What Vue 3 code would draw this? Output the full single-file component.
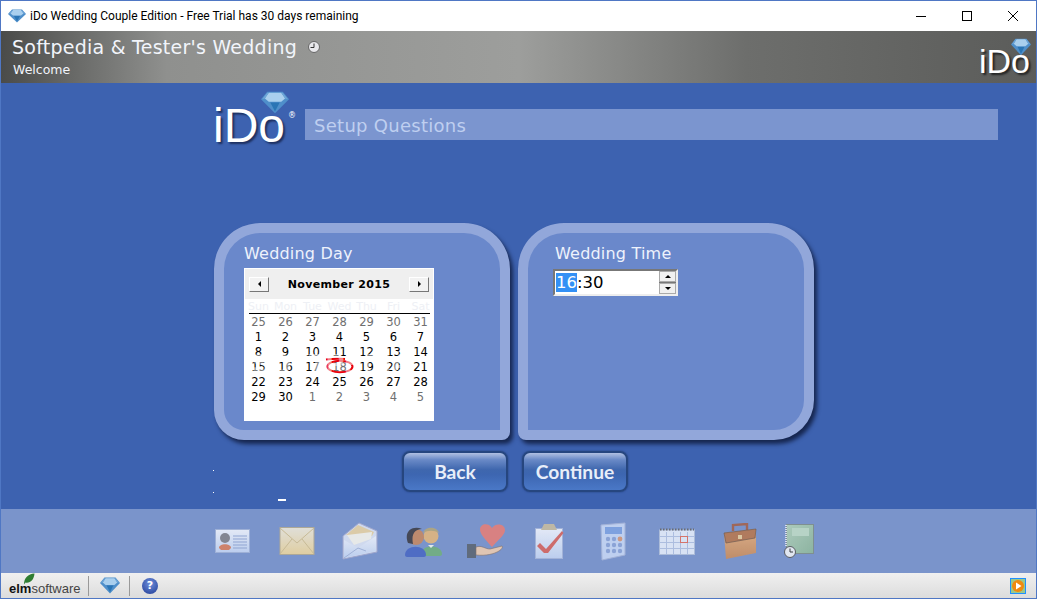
<template>
  <div class="window">
    <div class="titlebar">
      <svg class="title-gem" width="18" height="14" viewBox="0 0 18 14">
        <use href="#gem" />
      </svg>
      <span class="title-text">iDo Wedding Couple Edition - Free Trial has 30 days remaining</span>
      <div class="win-btns">
        <svg width="46" height="30" viewBox="0 0 46 30"><path d="M18 15.500h10" stroke="#000" fill="none" /></svg>
        <svg width="46" height="30" viewBox="0 0 46 30"><rect x="18.500" y="10.500" width="9" height="9" stroke="#000" fill="none" /></svg>
        <svg width="46" height="30" viewBox="0 0 46 30"><path d="M18 10l10 10M28 10l-10 10" stroke="#000" fill="none" /></svg>
      </div>
    </div>

    <header class="header">
      <div class="header-text">
        <div class="wedding-row">
          <span class="wedding-name">Softpedia &amp; Tester's Wedding</span>
          <svg class="clock" width="12" height="12" viewBox="0 0 12 12">
            <circle cx="6" cy="6" r="5.500" fill="#e8e8ec" stroke="#666" stroke-width="1" />
            <path d="M6 2.500V6.500H2.500" stroke="#333" fill="none" />
          </svg>
        </div>
        <div class="page-name">Welcome</div>
      </div>
      <div class="header-logo">
        <span>iDo</span>
        <svg class="header-gem" width="20" height="18" viewBox="0 0 18 14" preserveAspectRatio="none"><use href="#gem" /></svg>
      </div>
    </header>

    <main class="main">
      <div class="setup-row">
        <div class="big-logo">
          <span class="big-logo-text">iDo</span>
          <span class="reg">®</span>
          <svg class="big-gem" width="28" height="23" viewBox="0 0 18 14" preserveAspectRatio="none"><use href="#gem" /></svg>
        </div>
        <div class="setup-bar">Setup Questions</div>
      </div>

      <div class="panels">
        <section class="panel">
          <h2 class="panel-title">Wedding Day</h2>
          <div class="calendar">
            <div class="cal-head">
              <span class="cal-btn"><i class="tri-left"></i></span>
              <span class="cal-month">November 2015</span>
              <span class="cal-btn"><i class="tri-right"></i></span>
            </div>
            <div class="cal-dow">
              <span v-for="d in dows" :key="d">{{ d }}</span>
            </div>
            <div class="cal-rule"></div>
            <div class="cal-days">
              <span v-for="(c, i) in cells" :key="i" :class="['day', { muted: c.muted, 'is-today': c.today }]">
                {{ c.n }}
                <svg v-if="c.today" class="today" width="30" height="17" viewBox="0 0 30 17">
                  <ellipse cx="15" cy="9.500" rx="12.500" ry="5.800" fill="none" stroke="#e8000a" stroke-width="2" />
                  <path d="M1 2.500q10-1.200 19-.5" fill="none" stroke="#e8000a" stroke-width="2" />
                </svg>
              </span>
            </div>
            <span class="watermark">SOFTPEDIA</span>
          </div>
        </section>

        <section class="panel">
          <h2 class="panel-title time-title">Wedding Time</h2>
          <div class="time-box">
            <div class="time-value"><span class="sel">16</span>:30</div>
            <div class="spin">
              <span class="spin-btn"><i class="tri-up"></i></span>
              <span class="spin-btn"><i class="tri-down"></i></span>
            </div>
          </div>
        </section>
      </div>

      <div class="actions">
        <button class="action">Back</button>
        <button class="action">Continue</button>
      </div>

      <i class="speck s1"></i>
      <i class="speck s2"></i>
      <i class="speck s3"></i>
    </main>

    <nav class="dock">
      <!-- contact card -->
      <svg class="ic" width="37" height="26" viewBox="0 0 37 26">
        <defs>
          <linearGradient id="env" x1="0" y1="0" x2="0" y2="1">
            <stop offset="0" stop-color="#efeadb" />
            <stop offset="1" stop-color="#eed69c" />
          </linearGradient>
          <linearGradient id="blu" x1="0" y1="0" x2="0" y2="1">
            <stop offset="0" stop-color="#f2f5fc" />
            <stop offset="1" stop-color="#c5d6f3" />
          </linearGradient>
          <linearGradient id="grn" x1="0" y1="0" x2="1" y2="1">
            <stop offset="0" stop-color="#b4d3ba" />
            <stop offset="1" stop-color="#8fb89b" />
          </linearGradient>
          <linearGradient id="brf" x1="0" y1="0" x2="0" y2="1">
            <stop offset="0" stop-color="#e8b27e" />
            <stop offset="1" stop-color="#c98c5d" />
          </linearGradient>
        </defs>
        <rect x="1.500" y="1.500" width="34" height="23" fill="url(#blu)" stroke="#a3b4d8" />
        <circle cx="11" cy="10" r="5" fill="#85858b" />
        <path d="M5 20c0-5 12-5 12 0l-2 2H7z" fill="#d9805f" />
        <path d="M19 8h14M19 11h14M19 14h14M19 17h14M19 20h14" stroke="#93a8d4" stroke-width="1.200" />
      </svg>
      <!-- envelope -->
      <svg class="ic" width="36" height="30" viewBox="0 0 36 30">
        <rect x="1" y="1.500" width="34" height="27" fill="url(#env)" stroke="#b5ab90" />
        <path d="M1 2l17 15L35 2M1 28l12-15M35 28L23 13" fill="none" stroke="#d2c08f" />
      </svg>
      <!-- open envelope -->
      <svg class="ic" width="36" height="38" viewBox="0 0 36 38">
        <path d="M1 14L17 1l18 8v21L1 37z" fill="#dbe3f3" stroke="#a5a9cc" />
        <path d="M4 13L16 3l16 7-2 4z" fill="#e9d3a4" />
        <path d="M5 13l25-3-1 7-17 6z" fill="#f7f5ec" />
        <path d="M2 18l14 8 18-12v15L2 36z" fill="url(#blu)" />
        <path d="M2 36l14-10 8 3" fill="none" stroke="#a5b6d9" />
      </svg>
      <!-- couple -->
      <svg class="ic" width="38" height="31" viewBox="0 0 38 31">
        <circle cx="27" cy="10" r="7.500" fill="#e3b77d" />
        <path d="M19 7c2-7 14-7 16 0-5-3-11-3-16 0z" fill="#b3a77c" />
        <path d="M17 28c0-10 21-10 21 0 0 1-1 2-2 2H19c-1 0-2-1-2-2z" fill="#71b07e" />
        <path d="M24 19l3 3 3-3z" fill="#f0f4f0" />
        <circle cx="12" cy="11" r="8" fill="#c78962" />
        <path d="M4 17C-1 4 10-1 18 3c-7 0-11 5-9 15z" fill="#3e3e46" />
        <path d="M1 29c0-11 21-11 21 0 0 1-1 2-2 2H3c-1 0-2-1-2-2z" fill="#4a68c4" />
      </svg>
      <!-- heart in hand -->
      <svg class="ic" width="38" height="36" viewBox="0 0 38 36">
        <path d="M25 24C18 16 13 11 13 6.500 13 1 21-1 25 5c4-6 13-4 13 2 0 5-7 10-13 17z" fill="#e67f78" />
        <path d="M0 21h9v14H0z" fill="#5d6672" />
        <path d="M9 24c6-2 9 2 14 2l12-3c1 1 0 3-3 5-5 3-13 5-23 4z" fill="#eeccb0" stroke="#7d6b5f" stroke-width=".6" />
      </svg>
      <!-- checklist -->
      <svg class="ic" width="29" height="35" viewBox="0 0 29 35">
        <rect x=".5" y="4.500" width="27" height="30" fill="url(#blu)" stroke="#a9b8da" />
        <path d="M9 0h10l3 6H6z" fill="#c9bda0" />
        <path d="M2 22l3-3 6 6L27 7l1.500 2L13 29H9z" fill="#d9675f" />
      </svg>
      <!-- calculator -->
      <svg class="ic" width="26" height="39" viewBox="0 0 26 39">
        <path d="M1 3l24-2v32L2 38z" fill="#c8d8f5" stroke="#a9b7d9" />
        <rect x="5" y="5" width="17" height="7" fill="#7fa3e2" />
        <g fill="#8ea6d8">
          <circle cx="8" cy="17" r="2.200" /><circle cx="14" cy="17" r="2.200" />
          <circle cx="8" cy="23" r="2.200" /><circle cx="14" cy="23" r="2.200" /><circle cx="20" cy="23" r="2.200" />
          <circle cx="8" cy="29" r="2.200" /><circle cx="14" cy="29" r="2.200" /><circle cx="20" cy="29" r="2.200" />
        </g>
        <circle cx="20" cy="17" r="2.400" fill="#d89a78" />
      </svg>
      <!-- calendar -->
      <svg class="ic" width="36" height="27" viewBox="0 0 36 27">
        <rect x=".5" y="2" width="35" height="24.500" fill="#e6edfa" stroke="#b4c2dc" />
        <path d="M1 1.500h34" stroke="#666" stroke-width="2" stroke-dasharray="1.500 1.500" />
        <path d="M7.500 4v22M14.500 4v22M21.500 4v22M28.500 4v22M1 8.500h34M1 14.500h34M1 20.500h34" stroke="#b3c3e2" />
        <rect x="21.500" y="8.500" width="7" height="6" fill="none" stroke="#e2705f" />
      </svg>
      <!-- briefcase -->
      <svg class="ic" width="34" height="36" viewBox="0 0 34 36">
        <path d="M10 8V2l14-1v6" fill="none" stroke="#a5614a" stroke-width="2.400" />
        <path d="M1 10l32-4v24L3 36z" fill="url(#brf)" />
        <path d="M1 10l32-4-1 9-29 5z" fill="#b8784f" stroke="#6f5444" stroke-width=".7" />
        <rect x="15" y="12" width="4" height="4" fill="#e8cf9d" />
      </svg>
      <!-- book with clock -->
      <svg class="ic" width="31" height="34" viewBox="0 0 31 34">
        <rect x="2.500" y=".5" width="27" height="29" fill="url(#grn)" stroke="#7f8f88" />
        <rect x="8" y="4" width="17" height="8" fill="#c0dcc6" />
        <path d="M2 1v22" stroke="#e4e6f0" stroke-width="2" stroke-dasharray="1 1" />
        <circle cx="6" cy="28" r="5.500" fill="#f0f2f6" stroke="#555" />
        <path d="M6 24.500V28h3" fill="none" stroke="#333" />
      </svg>
    </nav>

    <footer class="status">
      <div class="elm">
        <svg class="leaf" width="12" height="12" viewBox="0 0 12 12"><path d="M1 11.500C1 5 5 1 11.500 .5 11 7 7 10.500 2.500 9.500z" fill="#2f7d32" /></svg>
        <span class="elm-bold">elm</span><span class="elm-soft">software</span>
      </div>
      <i class="sep"></i>
      <svg class="st-gem" width="20" height="17" viewBox="0 0 18 14" preserveAspectRatio="none"><use href="#gem" /></svg>
      <i class="sep"></i>
      <span class="help">?</span>
      <span class="play">
        <svg width="16" height="16" viewBox="0 0 16 16">
          <rect x=".5" y=".5" width="15" height="15" fill="#9cc88a" stroke="#1e90ff" />
          <circle cx="8" cy="8" r="6" fill="#f08a10" />
          <path d="M6 4.500l5.500 3.500L6 11.500z" fill="#fff" />
        </svg>
      </span>
    </footer>

    <svg class="sprites" width="0" height="0">
      <symbol id="gem" viewBox="0 0 18 14">
        <path d="M4 .5h10l4 4.500-9 8.500L0 5z" fill="#4f8fca" />
        <path d="M5 1h8l2.500 3.500L13 6.500H5L2.500 4.500z" fill="#a9cfee" />
        <path d="M5 1L2.500 4.500 .8 4.800 4 1zM13 1l2.500 3.500 1.700.3L14 1z" fill="#6fa6d8" />
        <path d="M6 7h6l-3 5.500z" fill="#2a75b5" />
      </symbol>
    </svg>
  </div>
</template>

<script setup>
const dows = ['Sun', 'Mon', 'Tue', 'Wed', 'Thu', 'Fri', 'Sat']

// oct 25..31, nov 1..30, dec 1..5
const cells = []
for (let n = 25; n <= 31; n++) cells.push({ n, muted: true })
for (let n = 1; n <= 30; n++) cells.push({ n, today: n === 18 })
for (let n = 1; n <= 5; n++) cells.push({ n, muted: true })
</script>

<style>
html, body {
  margin: 0;
  overflow: hidden;
}
</style>

<style scoped>
.window {
  position: relative;
  width: 1037px;
  height: 599px;
  box-sizing: border-box;
  border: 1px solid #4f77c4;
  display: flex;
  flex-direction: column;
  overflow: hidden;
  background: #3d62b0;
  font-family: "DejaVu Sans", Verdana, sans-serif;
}

.sprites {
  position: absolute;
}

.titlebar {
  height: 30px;
  flex: none;
  background: #fff;
  display: flex;
  align-items: center;
  padding-left: 7px;
}

.title-gem {
  margin-right: 4px;
  margin-top: -1px;
}

.title-text {
  font-family: Roboto, "Noto Sans", sans-serif;
  font-size: 12px;
  color: #000;
  margin-top: -1px;
}

.win-btns {
  margin-left: auto;
  display: flex;
}

.win-btns svg {
  display: block;
}

.header {
  height: 52px;
  flex: none;
  display: flex;
  justify-content: space-between;
  background: linear-gradient(90deg, #4a4b49 0%, #8f908e 16%, #9d9e9c 50%, #6d6e6c 72%, #5b5c5a 100%);
}

.header-text {
  padding: 3px 0 0 11px;
  color: #f2f5fb;
}

.wedding-row {
  display: flex;
  align-items: center;
  height: 26px;
}

.wedding-name {
  font-size: 19px;
  letter-spacing: 0.25px;
}

.clock {
  margin-left: 11px;
}

.page-name {
  font-size: 12.500px;
  margin-top: 2px;
  padding-left: 1px;
}

.header-logo {
  position: relative;
  width: 58px;
  height: 52px;
  color: #fff;
  font-family: "Liberation Sans", Arial, sans-serif;
  font-size: 34px;
  line-height: 52px;
  text-shadow: 2px 2px 2px #222;
  text-align: right;
  padding-right: 6px;
  box-sizing: border-box;
}

.header-logo span {
  display: block;
  margin-top: 4px;
}

.header-gem {
  position: absolute;
  right: 5px;
  top: 7px;
}

.main {
  position: relative;
  flex: 1;
  min-height: 0;
  display: flex;
  flex-direction: column;
  align-items: center;
}

.setup-row {
  width: 785px;
  height: 140px;
  display: flex;
  align-items: flex-start;
  align-self: flex-start;
  margin-left: 212px;
}

.big-logo {
  position: relative;
  width: 92px;
  height: 70px;
  flex: none;
}

.big-logo-text {
  position: absolute;
  left: 0;
  top: 13px;
  font-family: "Liberation Sans", Arial, sans-serif;
  font-size: 48px;
  line-height: 60px;
  color: #fff;
  text-shadow: 2px 2px 2px #1d2f5f;
}

.big-gem {
  position: absolute;
  left: 48px;
  top: 8px;
}

.reg {
  position: absolute;
  left: 75px;
  top: 28px;
  font-size: 8px;
  color: #fff;
}

.setup-bar {
  flex: 1;
  height: 31px;
  margin-top: 26px;
  padding-left: 9px;
  background: #7b95cf;
  color: #bfcff0;
  font-size: 18px;
  line-height: 34px;
  letter-spacing: 0.28px;
  box-sizing: border-box;
}

.panels {
  display: flex;
  gap: 8px;
  align-self: flex-start;
  margin-left: 213px;
}

.panel {
  width: 296px;
  height: 217px;
  box-sizing: border-box;
  border: 10px solid #92a7da;
  border-radius: 46px 46px 8px 30px;
  background: #6a88cb;
  box-shadow: 3px 4px 4px #16264f;
  padding: 11px 20px 0;
}

.panel:last-child {
  border-bottom-left-radius: 8px;
  border-bottom-right-radius: 40px;
}

.panel-title {
  margin: 0;
  font-size: 16px;
  font-weight: 400;
  color: #eef2fc;
  line-height: 20px;
  letter-spacing: 0.2px;
}

.calendar {
  position: relative;
  width: 190px;
  height: 153px;
  margin-top: 4px;
  background: #fff;
  font-size: 11.500px;
  color: #000;
  display: flex;
  flex-direction: column;
  overflow: hidden;
}

.cal-head {
  height: 30px;
  margin: 1px 1px 0;
  background: #efefef;
  display: flex;
  align-items: center;
  justify-content: space-between;
  padding: 0 4px;
  flex: none;
}

.cal-btn {
  width: 18px;
  height: 13px;
  background: #f2f2f2;
  border: 1px solid;
  border-color: #fff #777 #777 #fff;
  display: flex;
  align-items: center;
  justify-content: center;
}

.cal-month {
  font-weight: 700;
  font-size: 11px;
  letter-spacing: 0.35px;
}

.tri-left,
.tri-right,
.tri-up,
.tri-down {
  display: block;
  width: 0;
  height: 0;
  border: 3px solid transparent;
}

.tri-left {
  border-right-color: #000;
  border-left-width: 0;
}

.tri-right {
  border-left-color: #000;
  border-right-width: 0;
}

.tri-up {
  border-bottom-color: #000;
  border-top-width: 0;
}

.tri-down {
  border-top-color: #000;
  border-bottom-width: 0;
}

.cal-dow {
  display: grid;
  grid-template-columns: repeat(7, 27px);
  margin-left: 1px;
  height: 14px;
  line-height: 15px;
  font-size: 11px;
  text-align: center;
  color: #eef0f5;
  flex: none;
}

.cal-rule {
  height: 1px;
  margin: 0 4px 0 5px;
  background: #000;
  flex: none;
}

.cal-days {
  display: grid;
  grid-template-columns: repeat(7, 27px);
  grid-auto-rows: 15px;
  margin: 1px 0 0 1px;
  text-align: center;
  line-height: 15px;
}

.day {
  position: relative;
}

.muted,
.is-today {
  color: #6f6f6f;
}

.today {
  position: absolute;
  left: -1px;
  top: -3px;
}

/* faint site watermark that lies over the day grid */
.watermark {
  position: absolute;
  left: 7px;
  top: 82px;
  font-family: "Liberation Sans", Arial, sans-serif;
  font-size: 28px;
  font-weight: 700;
  line-height: 28px;
  color: rgba(255, 255, 255, 0.5);
  white-space: nowrap;
}

.time-title {
  margin-left: 7px;
}

.time-box {
  width: 125px;
  height: 27px;
  box-sizing: border-box;
  margin: 5px 0 0 5px;
  border: 2px solid;
  border-color: #777 #eee #eee #777;
  background: #fff;
  display: flex;
  align-items: center;
  justify-content: space-between;
}

.time-value {
  font-size: 16.500px;
  padding-left: 1px;
  color: #000;
}

.sel {
  background: #3390f5;
  color: #fff;
}

.spin {
  width: 17px;
  display: flex;
  flex-direction: column;
  gap: 1px;
  background: #777;
}

.spin-btn {
  background: #f0f0f0;
  border: 1px solid #aaa;
  display: flex;
  align-items: center;
  justify-content: center;
  height: 9px;
}

.actions {
  display: flex;
  gap: 14px;
  margin-top: 11px;
  align-self: flex-start;
  margin-left: 401px;
}

.action {
  width: 106px;
  height: 41px;
  border: 2px solid #26467f;
  border-radius: 8px;
  background: linear-gradient(#b0c0e2 0%, #6a8ac7 18%, #3f67ae 45%, #3d66b1 58%, #4a78c7 100%);
  color: #e8eef9;
  font-family: "Lato", "Noto Sans", sans-serif;
  font-size: 19.200px;
  font-weight: 700;
  padding: 0;
  box-shadow: 0 0 2px #203d78;
}

.speck {
  position: absolute;
  background: #fff;
}

.s1 { left: 212px; top: 387px; width: 1px; height: 1px; }
.s2 { left: 212px; top: 409px; width: 1px; height: 1px; }
.s3 { left: 277px; top: 416px; width: 8px; height: 2px; }

.dock {
  height: 64px;
  flex: none;
  box-sizing: border-box;
  padding-left: 213px;
  background: #7a94cb;
  display: grid;
  grid-template-columns: 65px 63px 62px 63px 68px 65px 59px 64px 61px auto;
  align-items: center;
}

.ic {
  display: block;
  opacity: 0.88;
  filter: blur(0.35px);
}

.status {
  height: 25px;
  flex: none;
  display: flex;
  align-items: center;
  background: linear-gradient(#f0f0f0, #dcdcdc);
  padding-left: 8px;
  position: relative;
}

.elm {
  position: relative;
  font-family: "Liberation Sans", Arial, sans-serif;
  font-size: 13px;
  color: #444;
  padding-top: 6px;
  width: 70px;
  white-space: nowrap;
}

.elm-bold {
  font-weight: 700;
  color: #111;
}

.leaf {
  position: absolute;
  left: 14px;
  top: -2px;
}

.sep {
  width: 1px;
  height: 20px;
  background: #999;
  margin-left: 9px;
}

.st-gem {
  margin: 0 0 0 11px;
}

.help {
  width: 16px;
  height: 16px;
  margin-left: 12px;
  border-radius: 50%;
  background: radial-gradient(circle at 50% 35%, #6f8fdc, #1e3a94);
  color: #fff;
  font-size: 11px;
  font-weight: 700;
  line-height: 16px;
  text-align: center;
}

.play {
  margin-left: auto;
  margin-right: 10px;
  height: 16px;
}

.play svg {
  display: block;
}
</style>
